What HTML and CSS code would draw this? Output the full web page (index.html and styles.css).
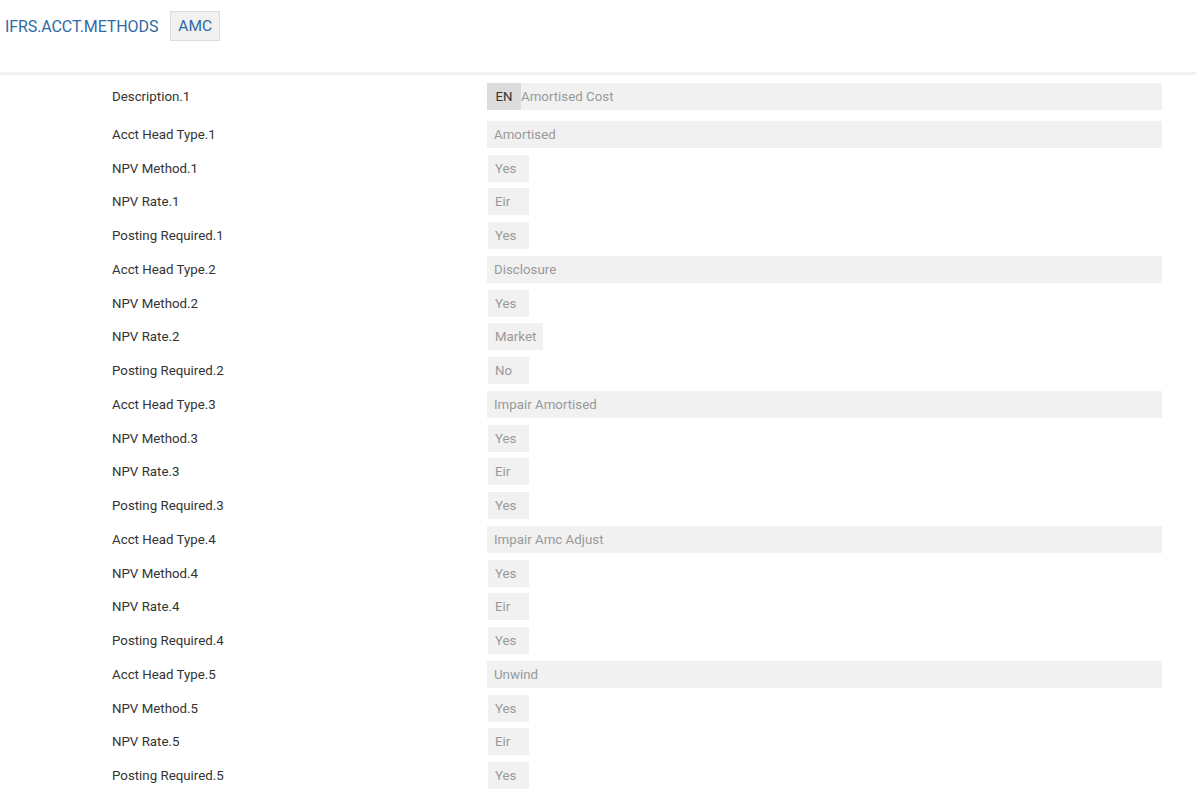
FILE: index.html
```html
<!DOCTYPE html>
<html>
<head>
<meta charset="utf-8">
<link rel="stylesheet" href="styles.css">
</head>
<body>
<header class="topbar">
  <span class="title">IFRS.ACCT.METHODS</span>
  <span class="badge">AMC</span>
</header>
<main class="form">
  <div class="row"><div class="label">Description.1</div><div class="field wide"><span class="lang">EN</span><span class="val">Amortised Cost</span></div></div>
  <div class="row"><div class="label">Acct Head Type.1</div><div class="field wide"><span class="val">Amortised</span></div></div>
  <div class="row"><div class="label">NPV Method.1</div><div class="field small"><span class="val">Yes</span></div></div>
  <div class="row"><div class="label">NPV Rate.1</div><div class="field small"><span class="val">Eir</span></div></div>
  <div class="row"><div class="label">Posting Required.1</div><div class="field small"><span class="val">Yes</span></div></div>
  <div class="row"><div class="label">Acct Head Type.2</div><div class="field wide"><span class="val">Disclosure</span></div></div>
  <div class="row"><div class="label">NPV Method.2</div><div class="field small"><span class="val">Yes</span></div></div>
  <div class="row"><div class="label">NPV Rate.2</div><div class="field small"><span class="val">Market</span></div></div>
  <div class="row"><div class="label">Posting Required.2</div><div class="field small"><span class="val">No</span></div></div>
  <div class="row"><div class="label">Acct Head Type.3</div><div class="field wide"><span class="val">Impair Amortised</span></div></div>
  <div class="row"><div class="label">NPV Method.3</div><div class="field small"><span class="val">Yes</span></div></div>
  <div class="row"><div class="label">NPV Rate.3</div><div class="field small"><span class="val">Eir</span></div></div>
  <div class="row"><div class="label">Posting Required.3</div><div class="field small"><span class="val">Yes</span></div></div>
  <div class="row"><div class="label">Acct Head Type.4</div><div class="field wide"><span class="val">Impair Amc Adjust</span></div></div>
  <div class="row"><div class="label">NPV Method.4</div><div class="field small"><span class="val">Yes</span></div></div>
  <div class="row"><div class="label">NPV Rate.4</div><div class="field small"><span class="val">Eir</span></div></div>
  <div class="row"><div class="label">Posting Required.4</div><div class="field small"><span class="val">Yes</span></div></div>
  <div class="row"><div class="label">Acct Head Type.5</div><div class="field wide"><span class="val">Unwind</span></div></div>
  <div class="row"><div class="label">NPV Method.5</div><div class="field small"><span class="val">Yes</span></div></div>
  <div class="row"><div class="label">NPV Rate.5</div><div class="field small"><span class="val">Eir</span></div></div>
  <div class="row"><div class="label">Posting Required.5</div><div class="field small"><span class="val">Yes</span></div></div>
</main>
</body>
</html>
```
FILE: styles.css
```css
* { box-sizing: border-box; }
html, body { margin: 0; padding: 0; background: #fff; }
body {
  font-family: Roboto, "Liberation Sans", Arial, sans-serif;
  font-size: 13.3px;
  color: #333;
  overflow: hidden;
}
.topbar {
  height: 75px;
  display: flex;
  align-items: flex-start;
  padding: 11px 0 0 5px;
  gap: 12px;
  border-bottom: 3px solid #f1f1f1;
}
.title {
  color: #2f6aa6;
  font-size: 16px;
  line-height: 31px;
  letter-spacing: -0.1px;
}
.badge {
  height: 30px;
  line-height: 29px;
  padding: 0 7px;
  background: #f1f1f1;
  border: 1px solid #dcdcdc;
  color: #2f6aa6;
  font-size: 15.5px;
}
.form {
  display: flex;
  flex-direction: column;
  gap: 6.75px;
  padding: 8px 34px 0 112px;
}
.row {
  display: flex;
  align-items: center;
  height: 27px;
}
.row:first-child { margin-bottom: 4px; }
.label {
  width: 375px;
  flex: none;
  color: #333;
}
.field {
  height: 27px;
  display: flex;
  align-items: center;
  background: #f1f1f1;
  color: #999;
}
.field.wide {
  flex: 1;
  padding-left: 7px;
}
.field.small {
  min-width: 41px;
  padding: 0 7px;
  margin-left: 1px;
}
.lang {
  background: #dcdcdc;
  color: #333;
  height: 27px;
  width: 34px;
  margin-left: -7px;
  display: flex;
  align-items: center;
  justify-content: center;
}
.val { white-space: nowrap; }
```
